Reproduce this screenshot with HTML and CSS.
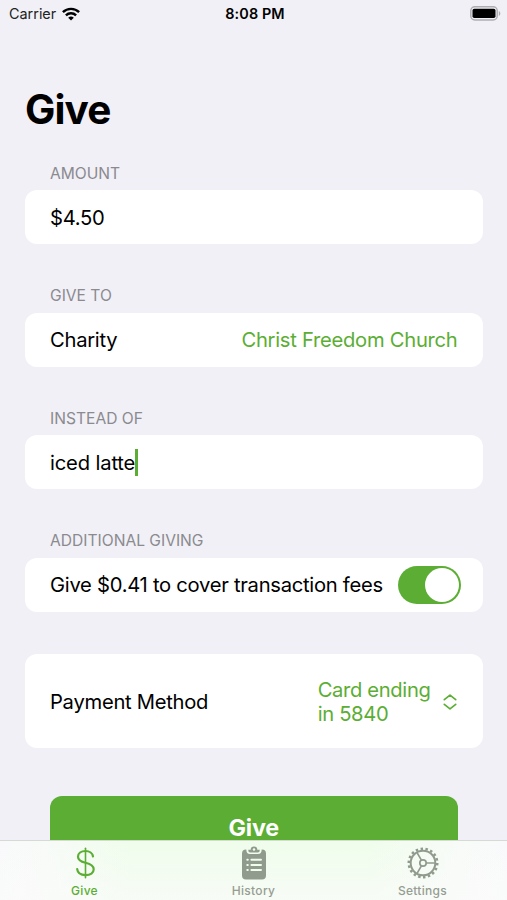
FILE: index.html
```html
<!DOCTYPE html>
<html lang="en">
<head>
<meta charset="UTF-8" />
<meta name="viewport" content="width=device-width, initial-scale=1.0" />
<title>Give</title>
<link rel="stylesheet" href="styles.css">
</head>
<body>
<div class="app">
  <div class="status-bar">
    <div class="carrier">
      <span>Carrier</span>
      <svg class="wifi" viewBox="0 0 18 14" fill="none" stroke="#000" stroke-width="2.4">
        <path d="M.9 5.2a11.5 11.5 0 0 1 16.2 0" />
        <path d="M3.9 8.4a7.2 7.2 0 0 1 10.2 0" />
        <path d="M9 13.6L6.2 10.8a4 4 0 0 1 5.6 0z" fill="#000" stroke="none" />
      </svg>
    </div>
    <div class="time">8:08 PM</div>
    <div class="battery-wrap">
      <svg class="battery" viewBox="0 0 31 15">
        <rect x=".8" y=".8" width="26.4" height="13.2" rx="4" fill="none" stroke="#aeaeb2" stroke-width="1.5" />
        <rect x="2.5" y="2.8" width="23" height="9.2" rx="1.8" />
        <path d="M28.8 5c2 .9 2 4 0 4.9z" fill="#aeaeb2" />
      </svg>
    </div>
  </div>

  <div class="content">
    <h1>Give</h1>

    <div class="section">
      <div class="label">AMOUNT</div>
      <div class="card">$4.50</div>
    </div>

    <div class="section">
      <div class="label">GIVE TO</div>
      <div class="card"><span>Charity</span><span class="green church">Christ Freedom Church</span></div>
    </div>

    <div class="section">
      <div class="label">INSTEAD OF</div>
      <div class="card"><span class="latte">iced latte</span><span class="cursor"></span></div>
    </div>

    <div class="section">
      <div class="label">ADDITIONAL GIVING</div>
      <div class="card toggle-card"><span>Give $0.41 to cover transaction fees</span><span class="toggle"><span class="knob"></span></span></div>
    </div>

    <div class="card payment">
      <span>Payment Method</span>
      <div class="picker">
        <div class="green card-name">Card ending<br />in 5840</div>
        <svg class="chevrons" viewBox="0 0 14 16" fill="none" stroke="#5bae33" stroke-width="1.7" stroke-linecap="round" stroke-linejoin="round">
          <path d="M1.3 5.7L7 1.2l5.7 4.5M1.3 10.3L7 14.8l5.7-4.5" />
        </svg>
      </div>
    </div>

    <div class="give-button">Give</div>
  </div>

  <div class="tab-bar">
    <div class="tab active">
      <svg class="icon" viewBox="0 0 36 36" fill="none" stroke="#5bae33" stroke-width="2.2" stroke-linecap="round">
        <path d="M18.5 3.2v29.6" stroke-width="1.6" />
        <path d="M26 11.5C25.600 8.200 22.600 6 18.500 6c-4.400 0-7.500 2.300-7.500 5.700 0 3.500 2.700 4.900 7.500 6 5.300 1.200 8.200 2.800 8.200 6.500 0 3.600-3.200 5.900-8.200 5.900-4.800 0-7.900-2.300-8.300-5.900" />
      </svg>
      <span>Give</span>
    </div>
    <div class="tab">
      <svg class="icon" viewBox="0 0 36 36">
        <path fill="#919b8d" d="M10 4.500h.3c0 3.200 1.400 4.500 3.700 4.500h8c2.300 0 3.700-1.300 3.700-4.500h.3q4 0 4 4v22q0 4-4 4H10q-4 0-4-4v-22q0-4 4-4z" />
        <path fill="#919b8d" d="M12.300 4.700H14.700a3.300 3.300 0 0 1 6.600 0h2.400v.9q0 1.900-1.800 1.900h-7.800q-1.800 0-1.800-1.900z" />
        <circle cx="18" cy="4.500" r="1.200" fill="#f0fdec" />
        <g stroke="#f0fdec" stroke-width="2" stroke-linecap="round">
          <path d="M11.300 14.700h.5M15.400 14.700h9.600M11.300 19.900h.5M15.400 19.900h9.600M11.300 25.100h.5M15.400 25.100h9.600" />
        </g>
      </svg>
      <span>History</span>
    </div>
    <div class="tab">
      <svg class="icon" viewBox="0 0 36 36" fill="none" stroke="#919b8d">
        <circle cx="18" cy="18" r="12.3" stroke-width="2" />
        <circle cx="18" cy="18" r="14.2" stroke-width="2.6" pathLength="72" stroke-dasharray="2 2" />
        <circle cx="18" cy="18" r="3.2" stroke-width="1.7" />
        <path stroke-width="1.7" d="M21.2 18h9.1M16.4 15.2L11.9 7.3M16.4 20.8l-4.5 7.9" />
      </svg>
      <span>Settings</span>
    </div>
  </div>
</div>
</body>
</html>
```
FILE: styles.css
```css
*{box-sizing:border-box;}
body{margin:0;background:#f1f0f6;color:#000;font-family:Inter,"Liberation Sans",sans-serif;}
.app{display:flex;flex-direction:column;height:900px;overflow:hidden;}
.status-bar{display:grid;grid-template-columns:1fr auto 1fr;align-items:center;height:27px;padding:0 6px 0 9px;font-size:14.4px;flex:none;}
.carrier{display:flex;align-items:center;gap:6px;color:#222;}
.wifi{width:18px;height:14px;}
.time{font-weight:600;letter-spacing:.1px;}
.battery-wrap{display:flex;justify-content:flex-end;}
.battery{width:31px;height:15px;}
.content{flex:1;min-height:0;overflow:hidden;padding:0 24.5px 0 25px;}
h1{margin:58px 0 30px;font-size:40.5px;line-height:50px;font-weight:700;letter-spacing:-.9px;}
.section{height:122.6px;}
.label{height:25px;padding:.6px 0 0 25px;color:#8a8a8f;font-size:15.6px;line-height:16px;}
.card{display:flex;align-items:center;height:54px;padding:1px 25px 0;background:#fff;border-radius:12px;font-size:20.2px;line-height:24px;letter-spacing:-.27px;white-space:nowrap;}
.green{color:#5bae33;}
.church{margin-left:auto;}
.latte{letter-spacing:-.15px;}
.cursor{width:2.5px;height:27px;margin-top:-1px;background:#5bae33;}
.toggle-card{padding-right:22px;}
.toggle{display:flex;justify-content:flex-end;width:63px;height:38px;margin:-1px 0 0 auto;padding:2px;background:#5bae33;border-radius:19px;}
.knob{width:34px;height:34px;background:#fff;border-radius:50%;}
.payment{height:94px;margin-top:-1px;}
.picker{display:flex;align-items:center;gap:12px;margin-left:auto;}
.card-name{letter-spacing:-.35px;}
.chevrons{width:14px;height:16px;margin-right:1px;}
.give-button{height:64px;margin:48px 25px 0;background:#5bae33;border-radius:12px;color:#fff;font-size:23.3px;font-weight:700;line-height:64px;text-align:center;letter-spacing:-.2px;}
.tab-bar{display:flex;flex:none;height:60px;border-top:1px solid #d5dbd3;background:linear-gradient(180deg,rgba(250,251,250,0),rgba(250,251,250,.75)),linear-gradient(90deg,#f9f9fb 0,#f8fbf8 45px,#effdeb 130px,#effdeb 370px,#f8fbf8 460px,#f9f9fb 100%);}
.tab{display:flex;flex:1;flex-direction:column;align-items:center;color:#969d93;font-size:12px;font-weight:500;line-height:16px;letter-spacing:.3px;}
.active{color:#5bae33;}
.icon{width:36px;height:36px;margin:4px 0 2px;}
```
